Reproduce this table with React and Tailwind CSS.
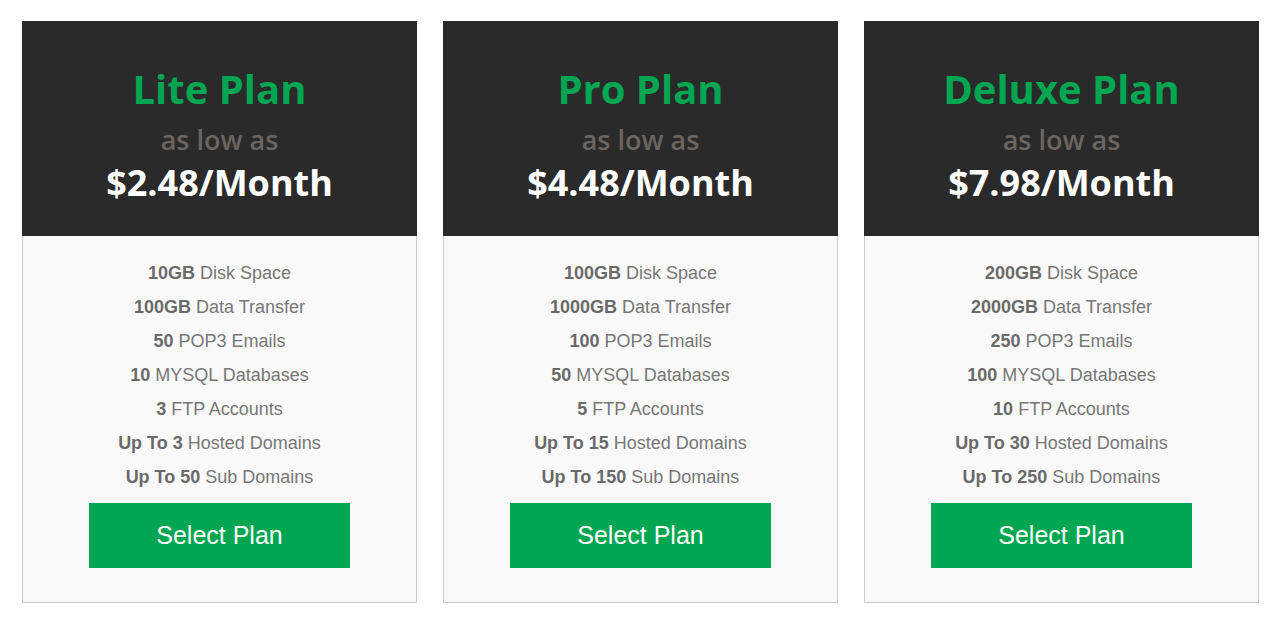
import React from "react";

const plans = [
  {
    name: "Lite Plan",
    price: "$2.48/Month",
    features: [
      ["10GB", "Disk Space"],
      ["100GB", "Data Transfer"],
      ["50", "POP3 Emails"],
      ["10", "MYSQL Databases"],
      ["3", "FTP Accounts"],
      ["Up To 3", "Hosted Domains"],
      ["Up To 50", "Sub Domains"],
    ],
  },
  {
    name: "Pro Plan",
    price: "$4.48/Month",
    features: [
      ["100GB", "Disk Space"],
      ["1000GB", "Data Transfer"],
      ["100", "POP3 Emails"],
      ["50", "MYSQL Databases"],
      ["5", "FTP Accounts"],
      ["Up To 15", "Hosted Domains"],
      ["Up To 150", "Sub Domains"],
    ],
  },
  {
    name: "Deluxe Plan",
    price: "$7.98/Month",
    features: [
      ["200GB", "Disk Space"],
      ["2000GB", "Data Transfer"],
      ["250", "POP3 Emails"],
      ["100", "MYSQL Databases"],
      ["10", "FTP Accounts"],
      ["Up To 30", "Hosted Domains"],
      ["Up To 250", "Sub Domains"],
    ],
  },
];

export default function App() {
  return (
    <div className="min-h-[626px] bg-white pt-[21px] pl-[22px]">
      <div className="flex gap-[26px]">
        {plans.map((p) => (
          <div key={p.name} className="w-[395px] flex flex-col">
            <div className="h-[215px] bg-[#2a2a2a] flex flex-col items-center pt-[43px] font-['Open_Sans',sans-serif]">
              <div className="text-[40px] leading-[50px] font-bold text-[#00a651]">{p.name}</div>
              <div className="text-[27px] leading-[34px] font-semibold text-[#6b6560] mt-[9px]">as low as</div>
              <div className="text-[36px] leading-[46px] font-bold text-white mt-[3px]">{p.price}</div>
            </div>
            <div className="bg-[#f9f9f9] border border-t-0 border-[#cccccc] flex flex-col items-center pt-[20px] pb-[34px] font-['Liberation_Sans',Arial,sans-serif]">
              {p.features.map(([b, t]) => (
                <div key={t} className="text-[18px] leading-[34px] text-[#777777]">
                  <span className="font-bold text-[#6a6a6a]">{b}</span> {t}
                </div>
              ))}
              <button className="mt-[9px] w-[261px] h-[65px] bg-[#00a651] text-white text-[25px] font-['Liberation_Sans',Arial,sans-serif]">
                Select Plan
              </button>
            </div>
          </div>
        ))}
      </div>
    </div>
  );
}
